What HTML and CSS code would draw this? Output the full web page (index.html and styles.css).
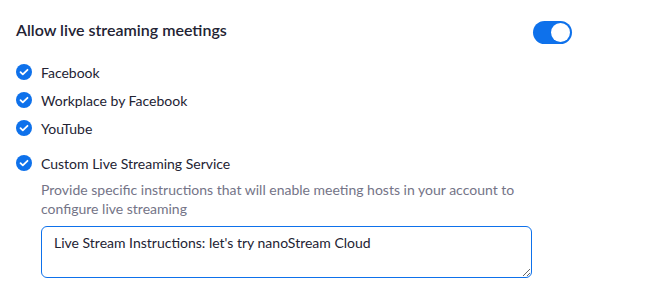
FILE: index.html
```html
<!DOCTYPE html>
<html lang="en">
<head>
    <meta charset="UTF-8">
    <title>Live Streaming Settings</title>
    <link rel="stylesheet" href="styles.css">
</head>
<body>
    <div class="setting">
        <div class="setting-header">
            <h2>Allow live streaming meetings</h2>
            <span class="toggle on"><span class="knob"></span></span>
        </div>

        <ul class="options">
            <li class="option">
                <span class="check"><svg viewBox="0 0 16 16"><path d="M4.5 8.2l2.3 2.2 4.7-4.6"/></svg></span>
                Facebook
            </li>
            <li class="option">
                <span class="check"><svg viewBox="0 0 16 16"><path d="M4.5 8.2l2.3 2.2 4.7-4.6"/></svg></span>
                Workplace by Facebook
            </li>
            <li class="option">
                <span class="check"><svg viewBox="0 0 16 16"><path d="M4.5 8.2l2.3 2.2 4.7-4.6"/></svg></span>
                YouTube
            </li>
            <li class="option custom">
                <span class="check"><svg viewBox="0 0 16 16"><path d="M4.5 8.2l2.3 2.2 4.7-4.6"/></svg></span>
                Custom Live Streaming Service
            </li>
        </ul>

        <div class="custom-body">
            <p class="hint">Provide specific instructions that will enable meeting hosts in your account to configure live streaming</p>
            <textarea class="instructions">Live Stream Instructions: let's try nanoStream Cloud</textarea>
        </div>
    </div>
</body>
</html>
```

FILE: styles.css
```css
:root {
    --blue: #0e71eb;
    --text: #232333;
    --muted: #747487;
}

* {
    margin: 0;
    padding: 0;
    box-sizing: border-box;
}

body {
    font-family: 'Lato', 'Open Sans', sans-serif;
    background: #fff;
    color: var(--text);
    padding: 18px 0 0 16px;
}

.setting {
    width: 556px;
}

.setting-header {
    display: flex;
    justify-content: space-between;
    align-items: center;
    height: 24px;
}

.setting-header h2 {
    font-size: 16px;
    font-weight: 600;
    line-height: 24px;
}

.toggle {
    display: flex;
    align-items: center;
    justify-content: flex-end;
    width: 39px;
    height: 23px;
    padding: 2px;
    border-radius: 12px;
    background: var(--blue);
    margin-top: 4px;
}

.knob {
    width: 19px;
    height: 19px;
    border-radius: 50%;
    background: #fff;
}

.options {
    list-style: none;
    margin-top: 16px;
}

.option {
    display: flex;
    align-items: center;
    gap: 9px;
    height: 28px;
    font-size: 14px;
}

.option.custom {
    margin-top: 7px;
}

.check {
    width: 16px;
    height: 16px;
    border-radius: 50%;
    background: var(--blue);
    display: flex;
}

.check svg {
    width: 16px;
    height: 16px;
    fill: none;
    stroke: #fff;
    stroke-width: 1.8;
    stroke-linecap: round;
    stroke-linejoin: round;
}

.custom-body {
    padding-left: 25px;
}

.hint {
    font-size: 14px;
    line-height: 19px;
    color: var(--muted);
    margin-top: 3px;
}

.instructions {
    display: block;
    width: 491px;
    height: 52px;
    margin-top: 8px;
    padding: 7px 12px;
    font-family: inherit;
    font-size: 14px;
    color: var(--text);
    border: 1px solid var(--blue);
    border-radius: 6px;
    resize: vertical;
    outline: none;
}
```
